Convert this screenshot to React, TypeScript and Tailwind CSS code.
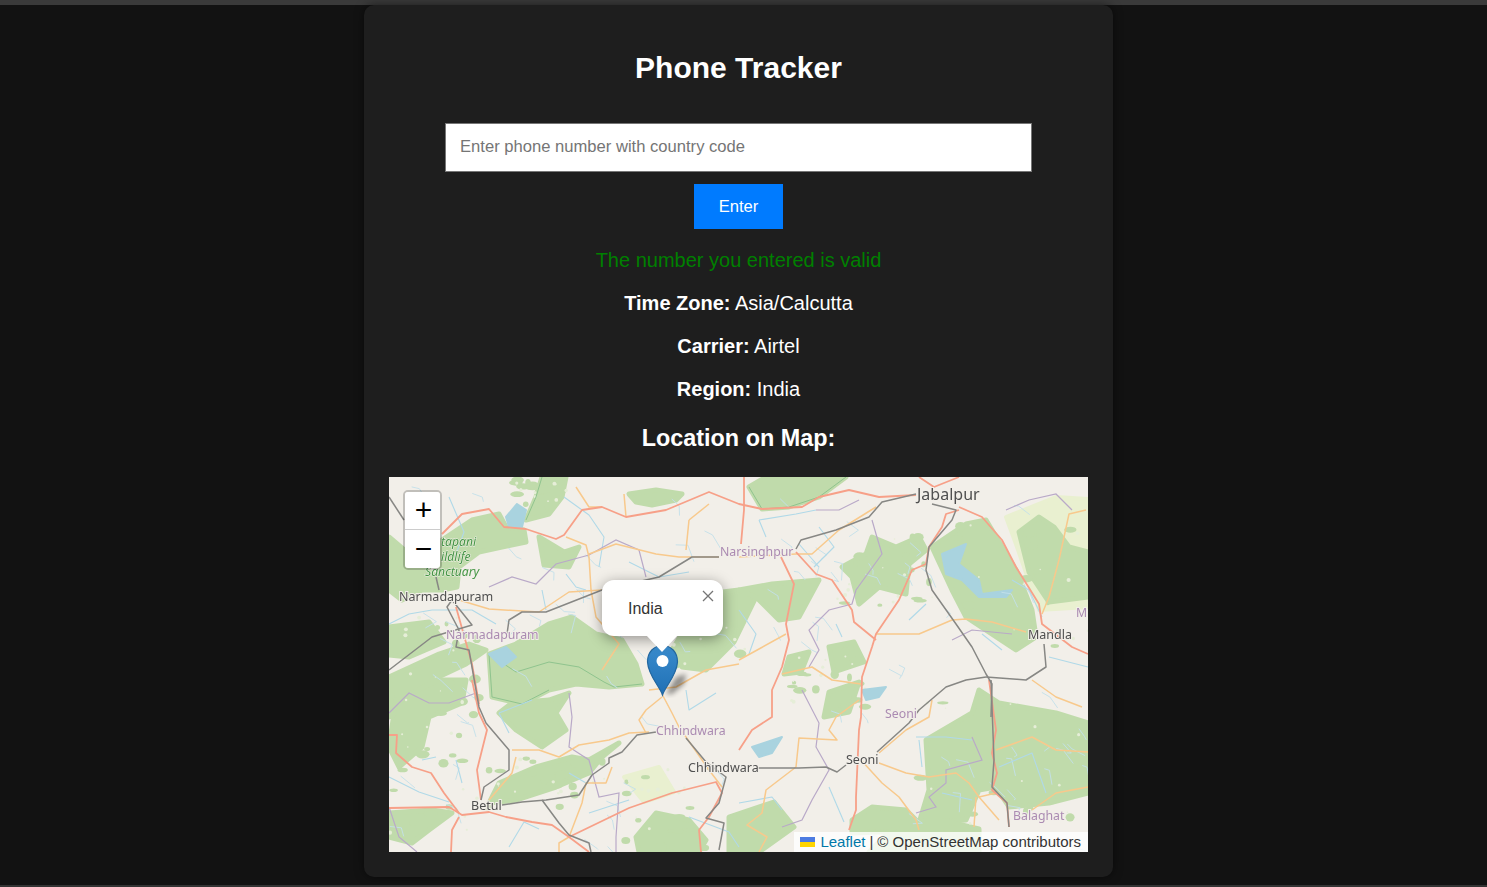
const forests = [
  "0,60 20,77 37,93 50,100 53,63 83,43 110,37 117,50 135,53 137,65 113,70 90,75 70,90 68,110 53,113 33,113 13,123 0,113",
  "137,43 147,20 153,0 177,0 173,20 160,37",
  "240,17 267,13 293,17 287,23 263,28 247,25",
  "100,177 127,167 160,147 183,140 207,157 233,163 247,187 253,207 220,210 187,207 160,213 133,227 103,220",
  "0,200 50,177 80,167 97,173 77,187 43,203 30,227 0,240",
  "283,173 317,117 350,113 367,120 345,165 317,193 293,190",
  "360,10 377,0 457,0 430,20 400,30 373,32",
  "7,223 50,203 77,203 73,226 40,240 33,270 10,290 0,270",
  "0,336 43,333 63,336 40,353 23,366 0,360",
  "100,326 110,306 147,290 183,280 200,283 230,266 213,280 200,296 167,310 127,323",
  "123,226 160,223 180,216 167,236 177,253 153,270 127,253 110,236",
  "247,360 267,336 300,343 317,363 310,375 250,375",
  "537,263 583,236 590,213 610,226 667,236 699,246 699,316 660,326 620,330 607,310 590,313 577,343 530,346 540,313",
  "463,343 483,330 517,333 527,343 517,354 463,356",
  "453,90 477,77 483,60 507,70 530,60 537,73 520,87 517,117 490,110 470,127 463,100",
  "543,70 577,47 597,43 627,93 643,133 647,160 627,173 577,140 563,113",
  "350,113 383,107 430,103 410,140 390,143 367,120",
  "630,55 650,40 665,50 680,70 699,75 699,120 660,125 640,95",
  "513,345 560,345 590,352 590,375 480,375 500,355",
  "400,180 420,175 412,195 395,197",
  "150,60 175,75 190,70 180,90 155,88",
  "440,215 470,205 460,235 435,240",
  "0,150 40,145 55,165 20,180 0,178",
  "340,340 385,325 405,350 370,375 340,375",
  "440,170 465,165 475,185 445,195",
];
const paleForests = [
  "617,40 667,20 699,22 699,130 650,133 627,67",
  "630,275 660,265 665,300 640,310",
  "235,300 270,290 285,315 255,325",
];
const water = [
  "553,77 577,67 570,87 590,103 593,117 623,113 617,120 590,120 573,103 557,97",
  "117,40 128,27 137,33 133,50 120,50",
  "100,177 117,170 127,180 113,190",
  "363,270 393,260 383,276 370,280",
  "473,213 497,210 490,220 477,223",
];
const rivers = [
  "0,147 20,137 43,133 83,133 107,147",
  "153,113 157,133",
  "177,97 187,110 197,113",
  "370,43 407,37 427,33",
  "370,43 377,60",
  "410,67 430,90",
  "350,133 367,157 360,177",
  "520,143 537,127",
  "447,147 453,160",
  "593,157 613,173",
  "623,103 640,113 653,140",
  "110,236 143,223",
  "110,236 120,256",
  "67,283 73,306",
  "33,283 47,280",
  "180,296 197,306",
  "200,336 240,323",
  "297,213 300,233 327,216",
  "527,260 557,260 583,263",
  "530,263 533,290",
  "610,290 643,276 657,316",
  "553,316 583,323",
  "350,326 383,320 393,333",
  "60,20 75,55 66,80",
  "175,20 200,38 215,60 210,90",
  "240,85 270,100 300,95",
  "0,300 30,315 60,325",
  "120,370 135,345 150,352",
  "440,310 455,345",
  "660,180 699,190",
  "300,340 340,355 350,370",
  "430,50 445,70 425,90",
];
const boundaries = [
  "100,110 123,100 147,107 167,87 200,78 227,63 250,73 257,100",
  "483,43 487,57 493,77 467,113 463,127 440,133 420,153 430,173 420,190",
  "413,213 430,246 427,270 440,293 423,323 413,343 393,350",
  "0,236 20,216 40,226 60,226 87,216",
  "180,216 183,240 180,270 200,283 210,320 230,316 227,360 227,375",
  "583,260 593,283 557,293 557,306 540,320 547,330 527,336",
  "563,163 583,153 623,157",
  "427,33 450,33 470,23",
  "617,33 640,23 667,17 683,33",
  "0,330 10,360 28,375",
];
const primaries = [
  "53,57 73,37 100,32 115,50 137,52 167,62 175,58 193,33 213,30 237,40 277,33 320,15 350,27 373,32 413,30 430,20 460,13 490,20 527,18",
  "570,33 557,37 553,50 540,70 537,87 523,93 510,123 487,157 483,170 473,200 472,240 470,253 467,320 467,333 460,353",
  "407,75 427,97 443,103 463,133 465,145 487,163",
  "392,80 405,107 397,147 400,163 393,190 383,213 383,240 363,253 350,273",
  "570,30 593,40 613,63 627,90 650,127 653,147 683,170 699,177",
  "355,0 355,33 352,67",
  "0,258 8,258 7,276 23,290 42,296 55,316 70,336",
  "0,331 60,330 73,338 100,335 117,340 143,345 163,348 180,360 200,375",
  "70,340 63,353 62,375",
  "83,203 90,236 98,253 88,293 92,323",
  "67,130 83,187 90,227",
  "180,360 240,331 283,316 327,305 333,316 320,340 310,353 312,375",
  "600,203 607,253 603,276 608,296 603,313 618,326 620,350",
  "530,0 545,10 570,0",
];
const secondaries = [
  "70,123 100,132 150,135 180,115 213,113",
  "200,80 202,113 207,140 230,167 213,193",
  "177,60 197,68 200,80",
  "200,77 227,67 267,77 290,80 330,80",
  "237,40 235,17",
  "300,43 297,73",
  "320,27 300,43",
  "260,213 287,210 317,193 350,187",
  "350,80 407,77 423,77 450,53 487,30",
  "487,157 530,157 563,143 577,142 603,145 637,155",
  "697,33 680,37 670,83 660,120 653,137",
  "350,183 370,172 397,157",
  "393,197 423,190 443,203 472,207",
  "123,273 150,273 170,280 190,268 220,263 240,256 260,255",
  "127,280 123,296 100,323",
  "273,220 257,233 250,243 257,256",
  "273,217 283,236 290,250 320,293 333,310",
  "223,290 217,306 197,306 193,326 180,360 170,366 170,375",
  "470,223 447,240 440,253 448,263 410,261 407,290 377,313 373,336 358,348 378,360 370,375",
  "472,283 493,306 510,320 527,343 530,353",
  "490,286 517,296 540,300 567,296 580,306 590,320 607,316",
  "587,320 585,350",
  "590,320 610,343",
  "607,273 643,260 667,273 699,275",
  "643,333 667,316 699,310",
  "543,223 540,240 517,253 490,276",
  "643,203 667,220 693,230",
  "187,10 200,30 213,30",
];
const rails = [
  "0,193 43,160 83,148 63,123 58,130 70,153 67,170 80,173 90,230 97,246 120,273 120,293 95,310 92,323",
  "118,157 120,143 133,135 157,135 213,113 270,100 303,80 330,80",
  "407,72 412,63 447,53 480,40 493,25 527,17",
  "0,20 15,43",
  "47,100 50,113",
  "543,27 567,33 563,43 540,70 537,93 543,113 567,147 583,170 597,197 603,207 602,240",
  "597,200 577,203 557,210 530,233 520,246 488,275",
  "597,200 637,203 657,190 655,167",
  "113,328 133,325 157,323 190,318 203,298 220,286 220,281 233,275 248,258 267,255",
  "153,323 170,346 180,358 200,366 202,375",
  "297,261 317,285 337,300 330,326 317,341 335,346 330,373",
  "368,291 410,291 437,290 448,295 457,288",
  "602,203 605,283 603,310 618,326 620,350",
];

// fine texture: seeded so every render gives the same map
function seeded(start: number) {
  let s = start;
  return () => {
    s = (s * 16807) % 2147483647;
    return s / 2147483647;
  };
}
const rand = seeded(4242);
const greenBoxes = [
  [0, 130, 90, 110],
  [0, 210, 100, 150],
  [270, 110, 90, 80],
  [100, 280, 130, 50],
  [440, 60, 110, 70],
  [560, 40, 139, 130],
  [530, 220, 169, 130],
  [230, 290, 90, 85],
  [120, 0, 60, 30],
  [400, 170, 80, 60],
];
const specks = greenBoxes.flatMap(([x, y, w, h]) =>
  Array.from({ length: 16 }, () => ({
    x: x + rand() * w,
    y: y + rand() * h,
    rx: 2 + rand() * 5,
    ry: 1.500 + rand() * 3,
  }))
);
const holes = greenBoxes.flatMap(([x, y, w, h]) =>
  Array.from({ length: 10 }, () => ({
    x: x + rand() * w,
    y: y + rand() * h,
    r: 0.600 + rand() * 1.500,
  }))
);
const creeks = Array.from({ length: 90 }, () => {
  const x = rand() * 699;
  const y = rand() * 375;
  return `${x},${y} ${x + 4 + rand() * 10},${y + rand() * 10} ${x + 2 + rand() * 18},${y + 8 + rand() * 12}`;
});

const cityLabels = [
  { text: "Jabalpur", x: 528, y: 23, size: 16 },
  { text: "Narmadapuram", x: 10, y: 124, size: 12.5 },
  { text: "Chhindwara", x: 299, y: 295, size: 12.5 },
  { text: "Seoni", x: 457, y: 287, size: 12.5 },
  { text: "Mandla", x: 639, y: 162, size: 12.5 },
  { text: "Betul", x: 82, y: 333, size: 12.5 },
];
const districtLabels = [
  { text: "Narsinghpur", x: 331, y: 79 },
  { text: "Narmadapuram", x: 57, y: 162 },
  { text: "Chhindwara", x: 267, y: 258 },
  { text: "Seoni", x: 496, y: 241 },
  { text: "Balaghat", x: 624, y: 343 },
  { text: "M", x: 687, y: 140 },
];
const parkLabels = [
  { text: "tapani", x: 52, y: 69 },
  { text: "ildlife", x: 52, y: 84 },
  { text: "Sanctuary", x: 36, y: 99 },
];

function MapBase() {
  return (
    <svg viewBox="0 0 699 375" className="block h-full w-full">
      <g className="blur-[0.6px]">
        <rect width="699" height="375" fill="#f2efe9" />
        {paleForests.map((p) => <polygon key={p} points={p} fill="#e9f0d0" stroke="#e9f0d0" strokeWidth="4" strokeLinejoin="round" />)}
        {forests.map((p) => <polygon key={p} points={p} fill="#c0dbab" stroke="#c0dbab" strokeWidth="5" strokeLinejoin="round" />)}
        {specks.map((s, i) => <ellipse key={i} cx={s.x} cy={s.y} rx={s.rx} ry={s.ry} fill="#c0dbab" />)}
        {holes.map((h, i) => <circle key={i} cx={h.x} cy={h.y} r={h.r} fill="#e6eed8" />)}
        <polyline points="100,177 127,195 160,185 190,190 215,205 225,210 253,207" fill="none" stroke="#8fc48e" strokeWidth="1" />
        <polyline points="100,177 103,220 133,227 160,213" fill="none" stroke="#8fc48e" strokeWidth="1" />
        <polyline points="137,43 147,20 153,0" fill="none" stroke="#8fc48e" strokeWidth="1" />
        <polyline points="360,10 373,32 400,30 430,20 457,0" fill="none" stroke="#8fc48e" strokeWidth="1" />
        {water.map((p) => <polygon key={p} points={p} fill="#a9d3df" stroke="#a9d3df" strokeWidth="2" strokeLinejoin="round" />)}
        {creeks.map((p) => <polyline key={p} points={p} fill="none" stroke="#c3e0ea" strokeWidth="0.9" strokeLinejoin="round" />)}
        {rivers.map((p) => <polyline key={p} points={p} fill="none" stroke="#b0d9e8" strokeWidth="1.100" strokeLinejoin="round" />)}
        {boundaries.map((p) => <polyline key={p} points={p} fill="none" stroke="#b9a9c8" strokeWidth="1.200" />)}
        {secondaries.map((p) => <polyline key={p} points={p} fill="none" stroke="#f8c98c" strokeWidth="1.500" strokeLinejoin="round" />)}
        {primaries.map((p) => <polyline key={p} points={p} fill="none" stroke="#f7a088" strokeWidth="1.800" strokeLinejoin="round" />)}
        {rails.map((p) => <polyline key={p} points={p} fill="none" stroke="#878784" strokeWidth="1.500" strokeLinejoin="round" />)}
      </g>
      <g className="blur-[0.3px]" fontFamily="'Noto Sans', 'Open Sans', sans-serif" paintOrder="stroke" stroke="#f2efe9" strokeWidth="2">
        {cityLabels.map((l) => <text key={l.text} x={l.x} y={l.y} fontSize={l.size} fill="#4f4f4f">{l.text}</text>)}
        {districtLabels.map((l) => <text key={l.x} x={l.x} y={l.y} fontSize="12.300" fill="#ab8bb2">{l.text}</text>)}
        {parkLabels.map((l) => <text key={l.text} x={l.x} y={l.y} fontSize="12.200" fontStyle="italic" fill="#459645" strokeWidth="1">{l.text}</text>)}
      </g>
    </svg>
  );
}

function MapMarker() {
  return (
    <svg viewBox="0 0 70 54" className="absolute left-[257px] top-[167px] h-[54px] w-[70px]">
      <defs>
        <linearGradient id="pin" x1="0" y1="0" x2="0" y2="1">
          <stop offset="0" stopColor="#3a8ccd" />
          <stop offset="1" stopColor="#2070b5" />
        </linearGradient>
      </defs>
      <polygon points="20,50 30,33 40,30 38,40 26,50" fill="#000" opacity="0.4" className="blur-[2.500px]" />
      <path
        d="M16.500 51 C14 43 2 31 1.500 18 C1.500 8 8 1.500 16.500 1.500 C25 1.500 31.500 8 31.500 18 C31 31 19 43 16.500 51 Z"
        fill="url(#pin)"
        stroke="#23679f"
        strokeWidth="1.200"
      />
      <circle cx="16.500" cy="17" r="6" fill="#fff" />
    </svg>
  );
}

function MapPopup() {
  return (
    <div className="absolute left-[213px] top-[103px] h-[56px] w-[121px] rounded-[12px] bg-white shadow-[0_3px_14px_rgba(0,0,0,0.4)]">
      <span className="absolute left-[26px] top-[20px] text-[16px] leading-[18px] text-[#333333]">India</span>
      <svg viewBox="0 0 12 12" className="absolute left-[100px] top-[10px] h-[12px] w-[12px]">
        <path d="M1 1 L11 11 M11 1 L1 11" stroke="#757575" strokeWidth="1.300" fill="none" />
      </svg>
      <svg viewBox="0 0 32 17" className="absolute left-[44px] top-[55px] h-[17px] w-[32px]">
        <polygon points="0,0 32,0 16,17" fill="#fff" />
      </svg>
    </div>
  );
}

function MapZoom() {
  return (
    <div className="absolute left-[14px] top-[13px] w-[39px] rounded-[5px] border-2 border-black/20 bg-clip-padding">
      <div className="flex h-[38px] items-center justify-center rounded-t-[3px] border-b border-[#cccccc] bg-white pb-[2px] pl-[2px] text-[30px] font-normal leading-none text-black">+</div>
      <div className="flex h-[38px] items-center justify-center rounded-b-[3px] bg-white pl-[2px] text-[30px] font-normal leading-none text-black">−</div>
    </div>
  );
}

function Attribution() {
  return (
    <div className="absolute bottom-0 right-0 flex h-[20px] items-center bg-white/80 pb-[2px] pl-[6px] pr-[7px] text-[15px] leading-none text-[#333333]">
      <svg viewBox="0 0 15 10" className="mr-[5px] mt-[2px] h-[10px] w-[15px]">
        <rect width="15" height="5" fill="#4c7be1" />
        <rect y="5" width="15" height="5" fill="#ffd500" />
      </svg>
      <span className="text-[#0078a8]">Leaflet</span>
      <span className="ml-[4px]">|</span>
      <span className="ml-[4px]">© OpenStreetMap contributors</span>
    </div>
  );
}

export default function App() {
  return (
    <div className="flex h-[887px] flex-col overflow-hidden bg-[#121212] font-['Liberation_Sans',Arial,sans-serif] text-white">
      <div className="h-[5px] shrink-0 bg-[#3a3a3a]" />
      <div className="flex min-h-0 flex-1 justify-center pr-[10px]">
        <main className="flex h-[872px] w-[749px] flex-col items-center rounded-[10px] bg-[#1e1e1e] px-[25px] pt-[44px] shadow-[0_0_10px_rgba(0,0,0,0.5)]">
          <h1 className="text-[30px] font-bold leading-[37px]">Phone Tracker</h1>
          <input
            type="text"
            placeholder="Enter phone number with country code"
            className="mt-[37px] h-[49px] w-[587px] border border-[#767676] bg-white px-[14px] pb-[2px] text-[16.600px] text-black outline-none placeholder:text-[#757575]"
          />
          <button className="mt-[12px] h-[45px] w-[89px] bg-[#007bff] pt-[2px] text-[16.600px] text-white">Enter</button>
          <p className="mt-[20px] text-[20px] leading-[23px] text-[#008000]">The number you entered is valid</p>
          <p className="mt-[20px] text-[20px] leading-[23px]"><strong>Time Zone:</strong> Asia/Calcutta</p>
          <p className="mt-[20px] text-[20px] leading-[23px]"><strong>Carrier:</strong> Airtel</p>
          <p className="mt-[20px] text-[20px] leading-[23px]"><strong>Region:</strong> India</p>
          <h3 className="mt-[23px] text-[23.400px] font-bold leading-[28px]">Location on Map:</h3>
          <div className="relative mt-[25px] h-[375px] w-[699px] overflow-hidden bg-[#f2efe9]">
            <MapBase />
            <MapMarker />
            <MapPopup />
            <MapZoom />
            <Attribution />
          </div>
        </main>
      </div>
      <div className="h-[8px] shrink-0" />
      <div className="h-[2px] shrink-0 bg-[#333333]" />
    </div>
  );
}
